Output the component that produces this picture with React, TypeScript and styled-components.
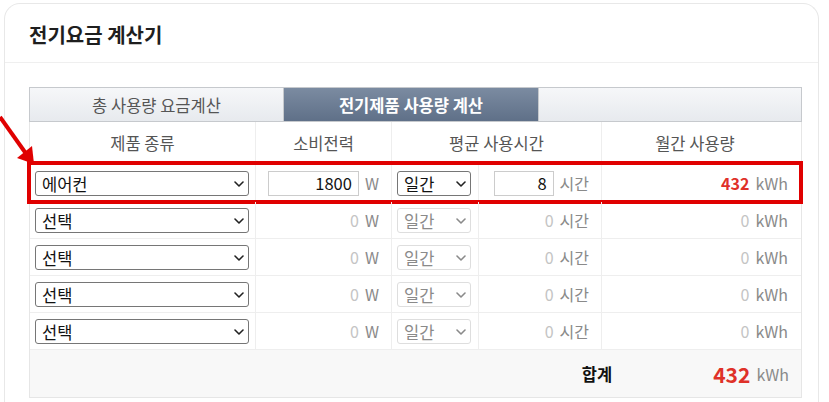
import React from 'react'
import styled, { createGlobalStyle } from 'styled-components'

const FONT = `"Noto Sans CJK KR", "Noto Sans", sans-serif`

const GlobalStyle = createGlobalStyle`
  body {
    margin: 0;
    background: #fff;
    font-family: ${FONT};
  }
`

type Item = {
  product: string
  watt: number
  period: string
  hours: number
  usage: number
}

const items: Item[] = [
  { product: '에어컨', watt: 1800, period: '일간', hours: 8, usage: 432 },
  { product: '선택', watt: 0, period: '일간', hours: 0, usage: 0 },
  { product: '선택', watt: 0, period: '일간', hours: 0, usage: 0 },
  { product: '선택', watt: 0, period: '일간', hours: 0, usage: 0 },
  { product: '선택', watt: 0, period: '일간', hours: 0, usage: 0 },
]

const Page = styled.div`
  position: relative;
  height: 402px;
  overflow: hidden;
  box-sizing: border-box;
  padding: 3px 10px 0 4px;
`

const Card = styled.section`
  border: 1px solid #e8e8e8;
  border-bottom: none;
  border-radius: 16px 16px 0 0;
  height: 430px;
`

const CardHeader = styled.header`
  height: 59px;
  display: flex;
  align-items: center;
  padding: 3px 0 0 24px;
  box-sizing: border-box;
  border-bottom: 1px solid #efefef;
  font-size: 20px;
  font-weight: 700;
  color: #1e1e1e;
`

const CardBody = styled.div`
  padding: 24px 16px 0 24px;
`

const Tabs = styled.div`
  display: grid;
  grid-template-columns: 254px 255px 1fr;
  height: 35px;
  box-sizing: border-box;
  border: 1px solid #c6c9cd;
`

const Tab = styled.div<{ $active?: boolean }>`
  display: flex;
  align-items: center;
  justify-content: center;
  font-size: 16.5px;
  font-weight: ${(p) => (p.$active ? 700 : 400)};
  color: ${(p) => (p.$active ? '#fff' : '#555')};
  background: ${(p) =>
    p.$active
      ? 'linear-gradient(#7b8ba1, #5f7088)'
      : 'linear-gradient(#f6f7f9, #e7eaee)'};
  border-right: 1px solid #c6c9cd;
  &:last-child {
    border-right: none;
  }
`

const Table = styled.div`
  border-left: 1px solid #e6e6e6;
  border-right: 1px solid #e6e6e6;
`

const Row = styled.div<{ $head?: boolean; $highlight?: boolean }>`
  position: relative;
  display: grid;
  grid-template-columns: 226px 136px 87px 123px 1fr;
  height: ${(p) => (p.$head ? 43 : 37)}px;
  box-sizing: border-box;
  border-bottom: 1px solid #eeeeee;
  ${(p) =>
    p.$highlight &&
    `
    &::after {
      content: '';
      position: absolute;
      top: -4px;
      bottom: -3px;
      left: -3px;
      right: -2px;
      border: 4px solid #e00000;
      pointer-events: none;
    }
  `}
`

const Cell = styled.div<{ $align?: 'left' | 'center' | 'right'; $span?: number }>`
  display: flex;
  align-items: center;
  justify-content: ${(p) =>
    p.$align === 'center' ? 'center' : p.$align === 'right' ? 'flex-end' : 'flex-start'};
  grid-column: span ${(p) => p.$span || 1};
  gap: 6px;
  padding: 0 12px 0 5px;
  border-right: 1px solid #eeeeee;
  font-size: 16px;
  &:last-child {
    border-right: none;
    padding-right: 13px;
  }
`

const HeadCell = styled(Cell)`
  color: #555;
  padding: 0;
  font-size: 16.5px;
`

const SelectWrap = styled.div<{ $w: number }>`
  position: relative;
  flex-shrink: 0;
  width: ${(p) => p.$w}px;
  height: 25px;
`

const Select = styled.select<{ $muted?: boolean }>`
  appearance: none;
  width: 100%;
  height: 100%;
  box-sizing: border-box;
  margin: 0;
  padding: 0 22px 0 6px;
  border: 1px solid ${(p) => (p.$muted ? '#dedede' : '#767676')};
  border-radius: 3px;
  background: #fff;
  font-family: ${FONT};
  font-size: 16.5px;
  color: ${(p) => (p.$muted ? '#8a8a8a' : '#111')};
  outline: none;
`

const Chevron = styled.svg<{ $muted?: boolean }>`
  position: absolute;
  right: 5px;
  top: 10px;
  width: 10px;
  height: 6px;
  pointer-events: none;
  stroke: ${(p) => (p.$muted ? '#8a8a8a' : '#222')};
`

const NumInput = styled.input<{ $w: number }>`
  flex-shrink: 0;
  width: ${(p) => p.$w}px;
  height: 25px;
  box-sizing: border-box;
  margin: 0;
  padding: 0 6px;
  border: 1px solid #cccccc;
  text-align: right;
  font-family: ${FONT};
  font-size: 16.5px;
  color: #111;
  outline: none;
`

const Zero = styled.span`
  color: #c4c4c4;
`

const Unit = styled.span`
  color: #8a8a8a;
`

const Amount = styled.span<{ $big?: boolean }>`
  color: #df3129;
  font-weight: 700;
  font-size: ${(p) => (p.$big ? 21 : 16)}px;
`

const Footer = styled.div`
  display: flex;
  align-items: center;
  justify-content: flex-end;
  gap: 6px;
  height: 47px;
  padding-right: 12px;
  background: #f8f8f8;
  border-bottom: 1px solid #e6e6e6;
  font-size: 16px;
`

const TotalLabel = styled.span`
  font-weight: 700;
  font-size: 16.5px;
  color: #111;
  margin-right: 95px;
`

const Arrow = styled.svg`
  position: absolute;
  left: 0;
  top: 110px;
  width: 40px;
  height: 60px;
`

function Dropdown({ value, width, muted }: { value: string; width: number; muted?: boolean }) {
  return (
    <SelectWrap $w={width}>
      <Select $muted={muted} value={value} onChange={() => {}}>
        <option>{value}</option>
      </Select>
      <Chevron $muted={muted} viewBox="0 0 10 6" fill="none" strokeWidth={1.6}>
        <path d="M1 1 L5 5 L9 1" strokeLinecap="round" strokeLinejoin="round" />
      </Chevron>
    </SelectWrap>
  )
}

function ItemRow({ item, index }: { item: Item; index: number }) {
  const filled = item.watt > 0
  return (
    <Row $highlight={index === 0}>
      <Cell>
        <Dropdown value={item.product} width={214} />
      </Cell>
      <Cell $align="right">
        {filled ? <NumInput $w={91} value={item.watt} readOnly /> : <Zero>0</Zero>}
        <Unit>W</Unit>
      </Cell>
      <Cell>
        <Dropdown value={item.period} width={74} muted={!filled} />
      </Cell>
      <Cell $align="right">
        {filled ? <NumInput $w={60} value={item.hours} readOnly /> : <Zero>0</Zero>}
        <Unit>시간</Unit>
      </Cell>
      <Cell $align="right">
        {filled ? <Amount>{item.usage}</Amount> : <Zero>0</Zero>}
        <Unit>kWh</Unit>
      </Cell>
    </Row>
  )
}

export default function App() {
  const total = items.reduce((sum, it) => sum + it.usage, 0)
  return (
    <Page>
      <GlobalStyle />
      <Card>
        <CardHeader>전기요금 계산기</CardHeader>
        <CardBody>
          <Tabs>
            <Tab>총 사용량 요금계산</Tab>
            <Tab $active>전기제품 사용량 계산</Tab>
            <Tab />
          </Tabs>
          <Table>
            <Row $head>
              <HeadCell $align="center">제품 종류</HeadCell>
              <HeadCell $align="center">소비전력</HeadCell>
              <HeadCell $align="center" $span={2}>평균 사용시간</HeadCell>
              <HeadCell $align="center">월간 사용량</HeadCell>
            </Row>
            {items.map((item, i) => (
              <ItemRow key={i} item={item} index={i} />
            ))}
            <Footer>
              <TotalLabel>합계</TotalLabel>
              <Amount $big>{total}</Amount>
              <Unit>kWh</Unit>
            </Footer>
          </Table>
        </CardBody>
      </Card>
      <Arrow viewBox="0 0 40 60">
        <line x1="0" y1="7" x2="27" y2="45" stroke="#e00000" strokeWidth="4" />
        <polygon points="17,48 34,54 32,36" fill="#e00000" />
      </Arrow>
    </Page>
  )
}
